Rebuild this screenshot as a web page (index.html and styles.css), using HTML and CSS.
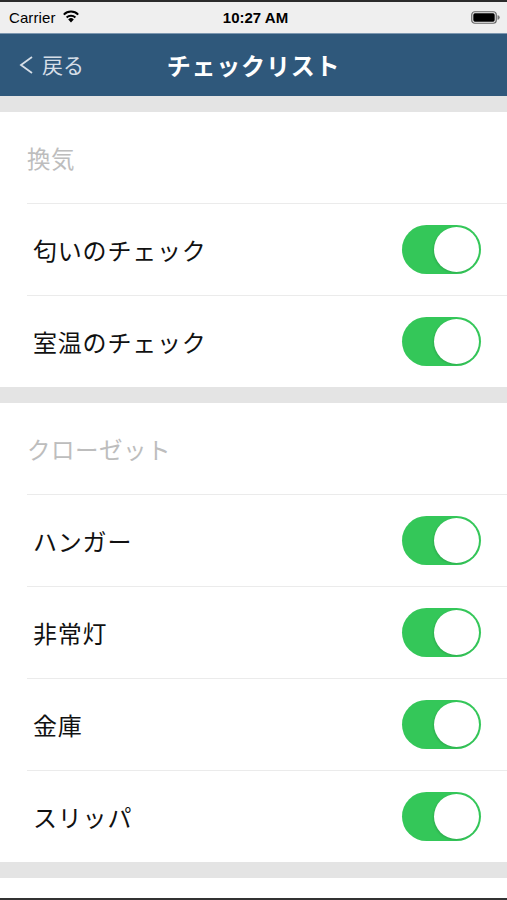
FILE: index.html
```html
<!DOCTYPE html>
<html lang="ja">
<head>
<meta charset="utf-8">
<link rel="stylesheet" href="styles.css">
</head>
<body>
<div class="screen">
  <div class="status">
    <div class="status-left">
      <span class="carrier">Carrier</span>
      <svg class="wifi" width="18" height="13" viewBox="0 0 18 13">
        <path d="M9 12.5 L6.2 9.4 A4 4 0 0 1 11.8 9.4 Z" fill="#000"/>
        <path d="M4.6 7.6 A6.4 6.4 0 0 1 13.4 7.6" fill="none" stroke="#000" stroke-width="2"/>
        <path d="M1.8 4.6 A10.2 10.2 0 0 1 16.2 4.6" fill="none" stroke="#000" stroke-width="2"/>
      </svg>
    </div>
    <div class="time">10:27 AM</div>
    <div class="status-right">
      <svg width="29" height="13" viewBox="0 0 29 13">
        <rect x="0.75" y="0.75" width="24.5" height="11.5" rx="3" fill="none" stroke="#666" stroke-width="1.2"/>
        <rect x="2.3" y="2.3" width="21.4" height="8.4" rx="1.6" fill="#000"/>
        <path d="M26.5 4.3 A2.2 2.2 0 0 1 26.5 8.7 Z" fill="#777"/>
      </svg>
    </div>
  </div>
  <div class="navbar">
    <div class="back">
      <svg class="chev" width="16" height="20" viewBox="0 0 16 20">
        <path d="M14 2 L3 10 L14 18" fill="none" stroke="#d6dee7" stroke-width="1.8"/>
      </svg>
      <span>戻る</span>
    </div>
    <div class="title">チェックリスト</div>
  </div>
  <div class="gap"></div>
  <section class="group">
    <div class="header">換気</div>
    <div class="row"><span class="label">匂いのチェック</span><span class="switch"><span class="knob"></span></span></div>
    <div class="row"><span class="label">室温のチェック</span><span class="switch"><span class="knob"></span></span></div>
  </section>
  <div class="gap"></div>
  <section class="group">
    <div class="header">クローゼット</div>
    <div class="row"><span class="label">ハンガー</span><span class="switch"><span class="knob"></span></span></div>
    <div class="row"><span class="label">非常灯</span><span class="switch"><span class="knob"></span></span></div>
    <div class="row"><span class="label">金庫</span><span class="switch"><span class="knob"></span></span></div>
    <div class="row"><span class="label">スリッパ</span><span class="switch"><span class="knob"></span></span></div>
  </section>
  <div class="gap"></div>
  <div class="tail"></div>
  <div class="bottom-line"></div>
</div>
</body>
</html>
```

FILE: styles.css
```css
* { box-sizing: border-box; }
html, body {
  margin: 0;
  padding: 0;
  background: #fff;
}
body {
  font-family: "Noto Sans CJK JP", "Noto Sans", sans-serif;
  width: 507px;
  height: 900px;
  overflow: hidden;
}
.screen {
  display: flex;
  flex-direction: column;
  height: 900px;
}
.screen > * { flex: none; }
.status {
  height: 33px;
  background: #efefef;
  border-top: 2px solid #2b2b2b;
  display: grid;
  grid-template-columns: 1fr auto 1fr;
  align-items: center;
  padding: 0 7px 1px 9px;
  font-family: "Liberation Sans", Arial, sans-serif;
  font-size: 15px;
  color: #000;
}
.status-left {
  display: flex;
  align-items: center;
  gap: 6px;
}
.carrier { letter-spacing: 0.1px; }
.wifi { margin-top: -1px; }
.time {
  font-weight: bold;
  font-size: 15px;
  padding-left: 2px;
}
.status-right {
  display: flex;
  justify-content: flex-end;
}
.navbar {
  height: 63px;
  background: #2f587b;
  border-top: 1px solid #7d97b0;
  display: flex;
  align-items: center;
  color: #fff;
  position: relative;
}
.back {
  display: flex;
  align-items: center;
  gap: 8px;
  padding-left: 18px;
  color: #d6dee7;
  font-size: 21px;
  padding-bottom: 2px;
}
.chev { margin-top: 1px; }
.title {
  position: absolute;
  left: 0;
  right: 0;
  text-align: center;
  font-size: 24px;
  font-weight: bold;
  letter-spacing: 0.8px;
  padding-bottom: 2px;
  pointer-events: none;
}
.gap {
  height: 16px;
  background: #e4e4e4;
}
.group {
  background: #fff;
  padding-left: 27px;
}
.header {
  height: 92px;
  display: flex;
  align-items: center;
  padding-top: 1px;
  font-size: 23.5px;
  color: #bdbdbd;
  letter-spacing: 0.5px;
  border-bottom: 1.5px solid #ebebeb;
}
.row {
  height: 92px;
  display: flex;
  align-items: center;
  justify-content: space-between;
  padding: 0 26px 0 6px;
  border-bottom: 1.5px solid #ebebeb;
}
.row:last-child {
  border-bottom: none;
  height: 91px;
}
.label {
  font-size: 24px;
  color: #111;
  letter-spacing: 0.8px;
}
.switch {
  width: 79px;
  height: 49px;
  border-radius: 25px;
  background: #34c759;
  display: flex;
  align-items: center;
  justify-content: flex-end;
  padding-right: 2px;
}
.knob {
  width: 45px;
  height: 45px;
  border-radius: 50%;
  background: #fff;
  box-shadow: -1px 1px 2px rgba(0,0,0,0.12);
}
.tail {
  height: 20px;
  background: #fff;
}
.bottom-line {
  height: 2px;
  background: #333;
}
```
